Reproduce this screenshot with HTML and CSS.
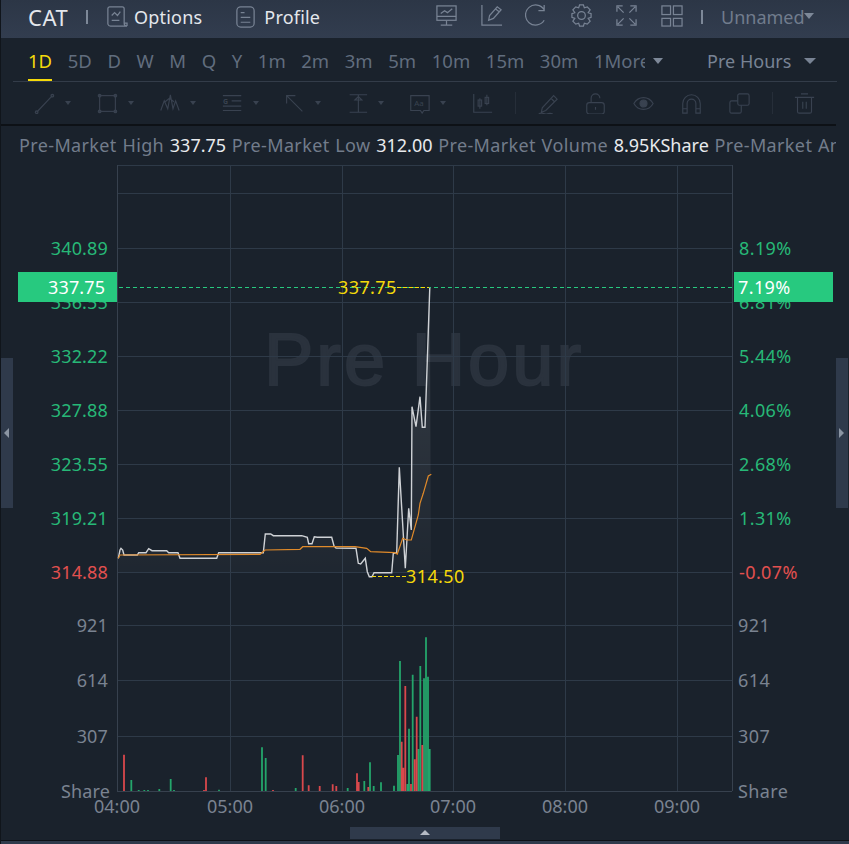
FILE: index.html
```html
<!DOCTYPE html>
<html lang="en">
<head>
    <meta charset="UTF-8">
    <title>CAT Pre Hours</title>
    <link rel="stylesheet" href="styles.css">
</head>
<body>
    <div class="pagina">
        <!-- top bar -->
        <header class="topo">
            <span class="ticker">CAT</span>
            <span class="sep sep-ticker"></span>
            <svg class="ico ico-options" viewBox="0 0 24 24"><path d="M3 20V4a2 2 0 0 1 2-2h13a2 2 0 0 1 2 2v15a3 3 0 0 0 3 3H6a3 3 0 0 1-3-2zM23 22v-3h-3M7 11l3-3 3 3 3-4M7 16h8"/></svg>
            <span class="topo-txt">Options</span>
            <svg class="ico ico-profile" viewBox="0 0 24 24"><rect x="3" y="2" width="18" height="21" rx="4"/><path d="M7 8h4M7 13h10M7 18h10"/></svg>
            <span class="topo-txt">Profile</span>
            <div class="topo-dir">
                <svg class="ico" viewBox="0 0 24 24"><rect x="2" y="2" width="20" height="15"/><path d="M2 13h20M12 17v5M6 22h12M6 10l4-3 3 2 5-4"/></svg>
                <svg class="ico" viewBox="0 0 24 24"><path d="M2 1v21h21M9 17l1-5 8-9 4 3-8 9zM16 5l4 3"/></svg>
                <svg class="ico" viewBox="0 0 24 24"><path d="M20 17a10.500 10.500 0 1 1 0-11M20 1v6h-6" /></svg>
                <svg class="ico" viewBox="0 0 24 24"><circle cx="12" cy="12" r="4"/><path d="M10 1h4l1 3 3-1 3 3-2 3 3 1v4l-3 1 2 3-3 3-3-1-1 3h-4l-1-3-3 1-3-3 2-3-3-1v-4l3-1-2-3 3-3 3 1z"/></svg>
                <svg class="ico" viewBox="0 0 24 24"><path d="M2 8V2h6M16 2h6v6M2 16v6h6M22 16v6h-6M3 3l6 6M21 3l-6 6M3 21l6-6M21 21l-6-6"/></svg>
                <svg class="ico" viewBox="0 0 24 24"><rect x="2" y="2" width="9" height="9"/><rect x="14" y="2" width="9" height="9"/><rect x="2" y="15" width="9" height="8"/><rect x="14" y="15" width="9" height="8"/></svg>
            </div>
            <span class="sep sep-nome"></span>
            <span class="nome">Unnamed</span><span class="seta seta-nome"></span>
        </header>

        <!-- periods -->
        <nav class="abas">
            <span class="aba ativa">1D</span>
            <span class="aba">5D</span>
            <span class="aba">D</span>
            <span class="aba">W</span>
            <span class="aba">M</span>
            <span class="aba">Q</span>
            <span class="aba">Y</span>
            <span class="aba">1m</span>
            <span class="aba">2m</span>
            <span class="aba">3m</span>
            <span class="aba">5m</span>
            <span class="aba">10m</span>
            <span class="aba">15m</span>
            <span class="aba">30m</span>
            <span class="aba aba-more">1More</span>
            <span class="seta seta-more"></span>
            <span class="aba pre-hours">Pre Hours</span>
            <span class="seta seta-pre"></span>
        </nav>

        <!-- drawing tools, disabled -->
        <div class="ferramentas">
            <svg class="fer" viewBox="0 0 24 24"><path d="M3 22L21 3"/><circle cx="3" cy="22" r="1.500"/><circle cx="21" cy="3" r="1.500"/></svg>
            <span class="mini"></span>
            <svg class="fer" viewBox="0 0 24 24"><rect x="3" y="3" width="18" height="18"/><circle cx="3" cy="3" r="1.500"/><circle cx="21" cy="3" r="1.500"/><circle cx="3" cy="21" r="1.500"/><circle cx="21" cy="21" r="1.500"/></svg>
            <span class="mini"></span>
            <svg class="fer" viewBox="0 0 24 24"><path d="M2 20L6 9l4 9 3-16 3 16 3-9 4 11M7 10l5-4 5 4"/></svg>
            <span class="mini"></span>
            <svg class="fer" viewBox="0 0 24 24"><path d="M1 3h21M1 20h21M1 15h21M11 9h11"/><text x="1" y="12" class="fer-g">G</text></svg>
            <span class="mini"></span>
            <svg class="fer" viewBox="0 0 24 24"><path d="M3 3l18 18M3 12V3h10"/></svg>
            <span class="mini"></span>
            <svg class="fer" viewBox="0 0 24 24"><path d="M3 2h20M3 22h20M13 2v20M9 8l4-4 4 4z"/></svg>
            <span class="mini"></span>
            <svg class="fer fer-aa" viewBox="0 0 24 24"><path d="M2 20V3h21v17H17l-2 3-2-3z"/><text x="6" y="15" class="fer-a">Aa</text></svg>
            <span class="mini"></span>
            <svg class="fer fer-kline" viewBox="0 0 24 24"><path d="M2 1v21h21M9 6v12M17 2v12"/><rect x="7" y="8" width="4" height="7"/><rect x="15" y="5" width="4" height="7"/></svg>
            <span class="divisor"></span>
            <svg class="fer" viewBox="0 0 24 24"><path d="M6 17l-1 5 5-2L23 7l-4-4zM16 6l4 4M2 24c4-3 6 1 9 0s5-1 7 0"/></svg>
            <svg class="fer" viewBox="0 0 24 24"><rect x="2" y="11" width="20" height="13" rx="3"/><path d="M7 11V6a5 5 0 0 1 10 0M12 16v3"/></svg>
            <svg class="fer" viewBox="0 0 24 24"><path d="M1 12c5-9 17-9 22 0-5 9-17 9-22 0z"/><circle cx="12" cy="12" r="4" class="cheio"/></svg>
            <svg class="fer" viewBox="0 0 24 24"><path d="M2 23V12a10 10 0 0 1 20 0v11h-5V12a5 5 0 0 0-10 0v11zM2 18h5M17 18h5"/></svg>
            <svg class="fer" viewBox="0 0 24 24"><rect x="10" y="1" width="13" height="13" rx="2"/><path d="M10 9H3a2 2 0 0 0-2 2v10a2 2 0 0 0 2 2h9a2 2 0 0 0 2-2v-7"/></svg>
            <span class="divisor"></span>
            <svg class="fer" viewBox="0 0 24 24"><path d="M1 5h22M8 1h8M4 5v16a2 2 0 0 0 2 2h12a2 2 0 0 0 2-2V5M10 10v8M14 10v8"/></svg>
        </div>

        <!-- pre market summary -->
        <div class="resumo">
            <span>Pre-Market High <b>337.75</b> Pre-Market Low <b>312.00</b> Pre-Market Volume <b>8.95KShare</b> Pre-Market Amount</span>
        </div>

        <!-- chart, coordinates in viewBox are page pixels -->
        <div class="grafico">
            <svg class="grafico-svg" viewBox="0 165 849 675">
                <defs>
                    <linearGradient id="sombra" x1="0" y1="0" x2="0" y2="1">
                        <stop offset="0" stop-color="#fff" stop-opacity="0.13"/>
                        <stop offset="1" stop-color="#fff" stop-opacity="0.02"/>
                    </linearGradient>
                </defs>

                <text class="marca" x="424" y="385">Pre Hour</text>

                <path class="grade" d="M117 165.500H732M117 193.500H732M117 248.500H732M117 302.500H732M117 356.500H732M117 410.500H732M117 464.500H732M117 518.500H732M117 572.500H732M117 625.500H732M117 680.500H732M117 736.500H732M230.500 165V791M342.500 165V791M453.500 165V791M565.500 165V791M677.500 165V791"/>
                <path class="eixo" d="M117.500 165V791M732.500 165V791M117 791.500H732"/>

                <path class="area" d="M118.300 558.300L120 550L121 548.300L122.700 550L124 555H137.300L138.700 552.700H146L148.700 548.700L152 550.700H166.700L168.700 552.700H178L180 558.300H216.700L218.700 552.700H263.300L265.300 534H270.700L273.300 535.700H301.700L307.300 537.300L308.700 543.700H312L314.300 536.700L317.300 537.300H331.700L334 546L336 548L356 548.300L358.300 563.300L360.700 564L365.300 558.300L367.300 571.700L369.300 576.700H372L374 572.700H391.700L393.300 553.300L396.700 552.700L399.300 467.300L405.300 568.300L408.700 508.300L411.300 530L412 406.700L416 426.700L420 396.700L422.300 427.300H425L429.800 287.300L431 572H118.300Z"/>

                <!-- volume -->
                <path class="vol-alta" d="M131.300 791V780M138.700 791V790M144.300 791V790M148 791V790M159.300 791V789M170.700 791V779M174 791V790M219 791V789.700M262 791V747.300M265.700 791V758M295.700 791V788M347.700 791V788M364.300 791V781M370 791V762.300M373.700 791V786M381 791V782.300M394 791V785.700M398 791V755M400 791V661M407.300 791V784M409 791V728.700M412.700 791V674.700M418.300 791V749M420.300 791V666M424 791V678.300M426 791V637.300M428 791V676.700M429.700 791V749"/>
                <path class="vol-baixa" d="M124 791V754.700M204 791V790M206 791V777.300M273 791V790M302.700 791V755.300M308.700 791V785.300M319.700 791V786M332.700 791V784.300M336.300 791V786M357 791V773.300M358.700 791V782M368.300 791V787M401.700 791V741.700M403.300 791V767.700M405.300 791V686M411 791V784M414.700 791V759.300M416.700 791V716.700M422.300 791V745"/>

                <!-- price and average -->
                <polyline class="preco" points="118.300,558.300 120,550 121,548.300 122.700,550 124,555 137.300,555 138.700,552.700 146,552.700 148.700,548.700 152,550.700 166.700,550.700 168.700,552.700 178,552.700 180,558.300 216.700,558.300 218.700,552.700 263.300,552.700 265.300,534 270.700,534 273.300,535.700 301.700,535.700 307.300,537.300 308.700,543.700 312,543.700 314.300,536.700 317.300,537.300 331.700,537.300 334,546 336,548 356,548.300 358.300,563.300 360.700,564 365.300,558.300 367.300,571.700 369.300,576.700 372,576.700 374,572.700 391.700,572.700 393.300,553.300 396.700,552.700 399.300,467.300 405.300,568.300 408.700,508.300 411.300,530 412,406.700 416,426.700 420,396.700 422.300,427.300 425,427.300 429.800,287.300"/>
                <polyline class="media" points="118.300,558.300 120,555 260,554.300 265,550 300,549.300 302.700,546.700 340,546.700 355,546.700 366.700,548.300 370.700,551.700 395,552.700 397.300,554 402.700,538.300 406.700,540 411.300,540 418.300,515 420,503.300 423.300,493.300 428.300,476 431.300,474.300"/>

                <!-- last price line and high / low marks -->
                <path class="tracejado" d="M119 287.500H733"/>
                <path class="tracejado-am" d="M397 287.500H429M372 576.500H406"/>
                <text class="marca-am" x="338" y="294">337.75</text>
                <text class="marca-am" x="406" y="583">314.50</text>

                <!-- left axis -->
                <g class="esq">
                    <text class="verde" x="108" y="255">340.89</text>
                    <text class="verde" x="108" y="309">336.55</text>
                    <text class="verde" x="108" y="363">332.22</text>
                    <text class="verde" x="108" y="417">327.88</text>
                    <text class="verde" x="108" y="471">323.55</text>
                    <text class="verde" x="108" y="525">319.21</text>
                    <text class="vermelho" x="108" y="579">314.88</text>
                    <text class="cinza" x="108" y="632">921</text>
                    <text class="cinza" x="108" y="687">614</text>
                    <text class="cinza" x="108" y="743">307</text>
                    <text class="cinza" x="110" y="798">Share</text>
                </g>

                <!-- right axis -->
                <g class="dir">
                    <text class="verde" x="739" y="255">8.19%</text>
                    <text class="verde" x="739" y="309">6.81%</text>
                    <text class="verde" x="739" y="363">5.44%</text>
                    <text class="verde" x="739" y="417">4.06%</text>
                    <text class="verde" x="739" y="471">2.68%</text>
                    <text class="verde" x="739" y="525">1.31%</text>
                    <text class="vermelho" x="739" y="579">-0.07%</text>
                    <text class="cinza" x="738" y="632">921</text>
                    <text class="cinza" x="738" y="687">614</text>
                    <text class="cinza" x="738" y="743">307</text>
                    <text class="cinza" x="738" y="798">Share</text>
                </g>

                <!-- time axis -->
                <g class="horas">
                    <text x="117" y="813">04:00</text>
                    <text x="230" y="813">05:00</text>
                    <text x="342" y="813">06:00</text>
                    <text x="453" y="813">07:00</text>
                    <text x="565" y="813">08:00</text>
                    <text x="677" y="813">09:00</text>
                </g>

                <rect class="etiqueta" x="18" y="272" width="99" height="30"/>
                <rect class="etiqueta" x="734" y="272" width="99" height="30"/>
                <text class="etiqueta-txt" x="48" y="294">337.75</text>
                <text class="etiqueta-txt tag-dir" x="738" y="294">7.19%</text>
            </svg>
        </div>

        <div class="pe"></div>

        <div class="alca alca-esq"><span class="tri-esq"></span></div>
        <div class="alca alca-dir"><span class="tri-dir"></span></div>
        <div class="alca-baixo"><span class="tri-cima"></span></div>
    </div>
</body>
</html>
```

FILE: styles.css
```css
* {
    margin: 0;
    padding: 0;
    box-sizing: border-box;
}

html, body {
    height: 100%;
    overflow: hidden;
    background-color: #1a222c;
}

body {
    font-family: "Noto Sans", Arial, sans-serif;
    color: #e8eaed;
}

.pagina {
    position: relative;
    width: 849px;
    height: 844px;
    border-left: 1px solid #10151b;
    display: flex;
    flex-direction: column;
}

/* Barra superior */
.topo {
    height: 38px;
    flex: none;
    display: flex;
    align-items: center;
    background: linear-gradient(#2c3646, #323d4f);
    padding-left: 27px;
    padding-bottom: 5px;
    font-size: 18px;
    color: #e4e7ec;
}

.ticker {
    font-size: 22px;
    letter-spacing: 0.6px;
    width: 58px;
}

.sep {
    width: 2px;
    height: 14px;
    background-color: #7d8898;
}

.sep-ticker {
    margin-right: 17px;
}

.ico {
    width: 23px;
    height: 23px;
    fill: none;
    stroke: #788394;
    stroke-width: 1.3;
    flex: none;
}

.ico-options {
    margin-right: 6px;
}

.ico-profile {
    margin-left: 32px;
    margin-right: 7px;
}

.topo-txt {
    line-height: 1;
    letter-spacing: 0.2px;
}

.topo-dir {
    display: flex;
    gap: 22px;
    position: absolute;
    left: 434px;
    top: 4px;
}

.sep-nome {
    position: absolute;
    left: 700px;
    top: 10px;
}

.nome {
    position: absolute;
    left: 720px;
    top: 5px;
    color: #717c8d;
}

.seta {
    width: 0;
    height: 0;
    border-left: 5px solid transparent;
    border-right: 5px solid transparent;
    border-top: 6px solid #7d8898;
}

.seta-nome {
    position: absolute;
    left: 803px;
    top: 13px;
}

/* Periodos */
.abas {
    position: relative;
    height: 44px;
    flex: none;
    display: flex;
    align-items: center;
    gap: 15.6px;
    padding-left: 27px;
    padding-top: 1px;
    font-size: 18.5px;
    color: #616d7e;
}

.abas::after {
    content: "";
    position: absolute;
    left: 12px;
    width: 824px;
    bottom: 0;
    height: 1px;
    background-color: #333c49;
}

.aba {
    position: relative;
    white-space: nowrap;
}

.ativa {
    color: #f5d90a;
}

.ativa::after {
    content: "";
    position: absolute;
    left: 0;
    right: 0;
    top: 31px;
    height: 2px;
    background-color: #f5d90a;
    z-index: 1;
}

.aba-more {
    width: 51px;
    overflow: hidden;
}

.seta-more {
    margin-left: -8px;
}

.pre-hours {
    margin-left: 29px;
    font-size: 18px;
    color: #788394;
}

.seta-pre {
    margin-left: -3px;
    border-left-width: 6px;
    border-right-width: 6px;
    border-top-color: #788394;
}

/* Ferramentas */
.ferramentas {
    height: 44px;
    flex: none;
    width: 835px;
    display: flex;
    align-items: center;
    padding-left: 33px;
    border-bottom: 2px solid #0d1116;
}

.fer {
    width: 21px;
    height: 21px;
    fill: none;
    stroke: #394250;
    stroke-width: 1.3;
    flex: none;
    margin-right: 27px;
}

.fer text {
    fill: #394250;
    stroke: none;
}

.fer-g {
    font-size: 8px;
    font-weight: bold;
}

.fer-a {
    font-size: 9px;
}

.cheio {
    fill: #394250;
}

.mini {
    width: 0;
    height: 0;
    flex: none;
    border-left: 3px solid transparent;
    border-right: 3px solid transparent;
    border-top: 4px solid #394250;
    margin-left: -17px;
    margin-right: 25.5px;
}

.divisor {
    width: 1px;
    height: 22px;
    background-color: #262e39;
    margin-left: -5px;
    margin-right: 21px;
    flex: none;
}

/* Resumo */
.resumo {
    height: 39px;
    flex: none;
    width: 835px;
    padding-left: 18px;
    line-height: 38px;
    font-size: 18px;
    letter-spacing: 0.37px;
    word-spacing: 0.65px;
    color: #727c8b;
    white-space: nowrap;
    overflow: hidden;
}

.resumo b {
    font-weight: normal;
    letter-spacing: 0;
    color: #e8eaed;
}

/* Grafico */
.grafico {
    flex: none;
    width: 849px;
    height: 675px;
    margin-left: -1px;
}

.grafico-svg {
    display: block;
    width: 849px;
    height: 675px;
    font-size: 18px;
}

.grade {
    stroke: #2e3a48;
    stroke-width: 1;
    fill: none;
}

.eixo {
    stroke: #37414e;
    stroke-width: 1;
    fill: none;
}

.marca {
    font-family: "Liberation Sans", Arial, sans-serif;
    font-size: 74px;
    letter-spacing: 3px;
    text-anchor: middle;
    fill: #2a323d;
    stroke: #2a323d;
    stroke-width: 2;
}

.area {
    fill: url(#sombra);
}

.preco {
    fill: none;
    stroke: #cfd2d6;
    stroke-width: 1.4;
}

.media {
    fill: none;
    stroke: #e08a2a;
    stroke-width: 1.2;
}

.vol-alta {
    stroke: #24a56b;
    stroke-width: 1.8;
}

.vol-baixa {
    stroke: #d9484c;
    stroke-width: 1.8;
}

.tracejado {
    stroke: #27c97f;
    stroke-width: 1;
    stroke-dasharray: 4 3;
}

.tracejado-am {
    stroke: #f5d90a;
    stroke-width: 1;
    stroke-dasharray: 4 2;
}

.marca-am {
    fill: #f5d90a;
    letter-spacing: 0.4px;
}

.esq text {
    text-anchor: end;
    letter-spacing: 0.15px;
}

.dir text {
    letter-spacing: 0.4px;
}

.verde {
    fill: #27b877;
}

.vermelho {
    fill: #e2504f;
}

.cinza {
    fill: #7a8391;
}

.horas text {
    text-anchor: middle;
    fill: #7a8391;
}

.etiqueta {
    fill: #27c97f;
}

.etiqueta-txt {
    fill: #fff;
    letter-spacing: 0.15px;
}

.tag-dir {
    letter-spacing: 0.4px;
}

/* Alcas laterais */
.alca {
    position: absolute;
    top: 358px;
    width: 12px;
    height: 150px;
    background-color: #2f3a4b;
}

.alca-esq {
    left: 0;
}

.alca-dir {
    left: 835px;
}

.tri-esq, .tri-dir, .tri-cima {
    position: absolute;
    width: 0;
    height: 0;
    border-style: solid;
    border-color: transparent;
}

.tri-esq {
    left: 3px;
    top: 70px;
    border-width: 5px 5px 5px 0;
    border-right-color: #8b95a3;
}

.tri-dir {
    left: 3px;
    top: 70px;
    border-width: 5px 0 5px 5px;
    border-left-color: #8b95a3;
}

.alca-baixo {
    position: absolute;
    left: 349px;
    top: 827px;
    width: 150px;
    height: 12px;
    background-color: #2f3a4b;
}

.tri-cima {
    left: 70px;
    top: 3px;
    border-width: 0 5px 5px 5px;
    border-bottom-color: #b4bac4;
}

.pe {
    flex: none;
    height: 4px;
    border-top: 1px solid #0d1116;
    background-color: #2f3a4b;
}
```
